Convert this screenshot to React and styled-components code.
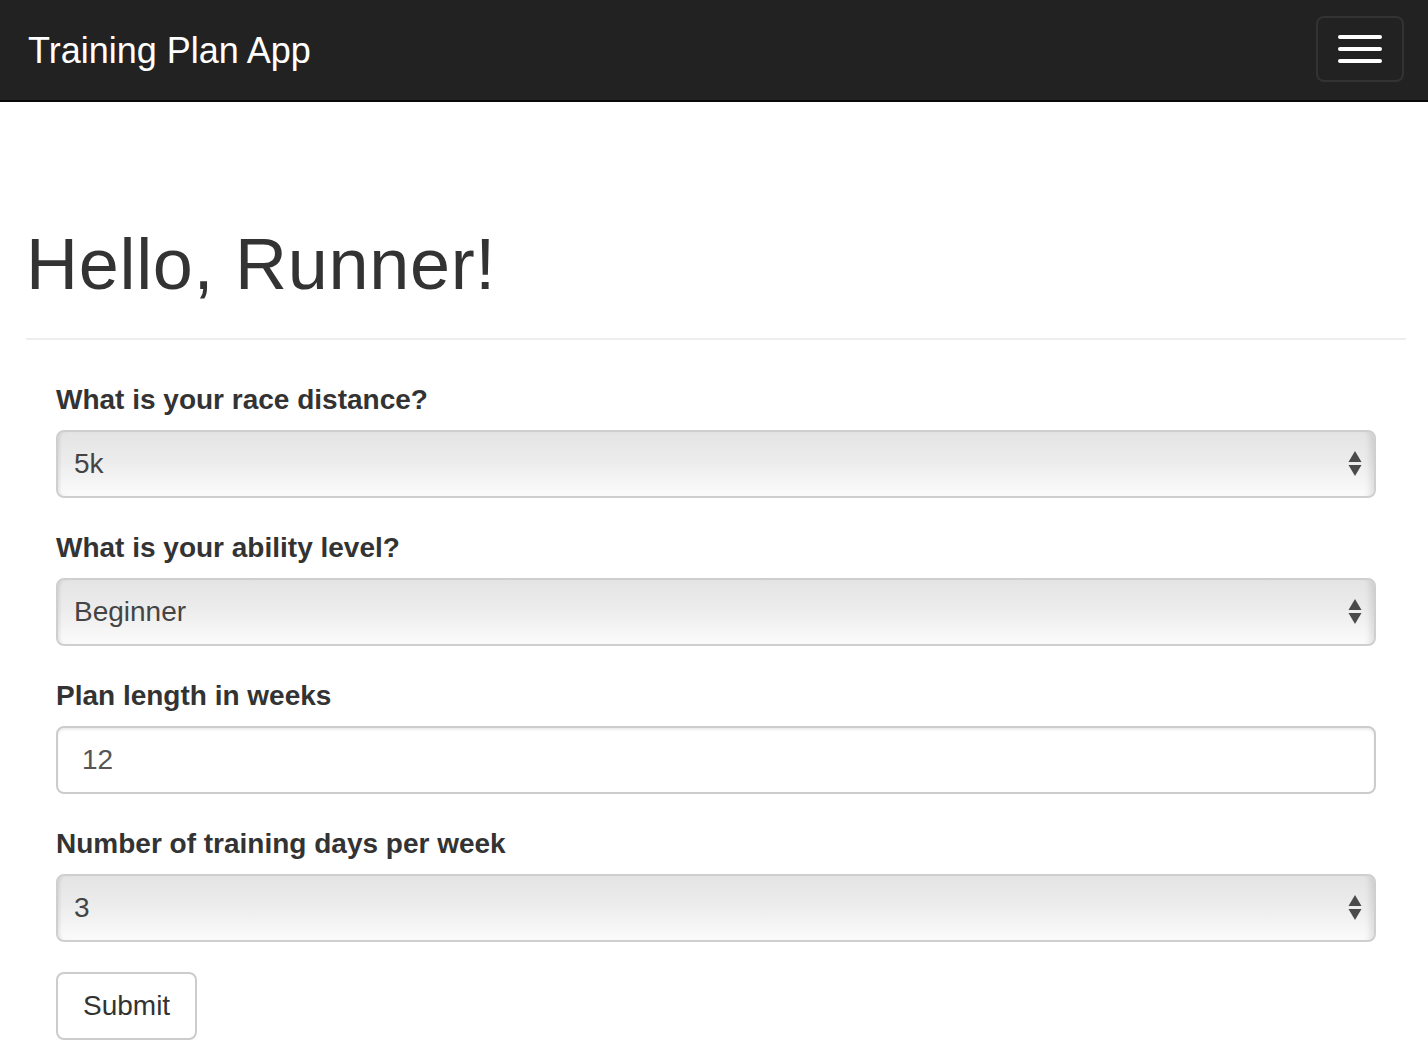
import React from "react";
import styled, { createGlobalStyle } from "styled-components";

const Global = createGlobalStyle`
  * { box-sizing: border-box; }
  html, body { margin: 0; padding: 0; background: #fff; }
  body {
    font-family: "Liberation Sans", Arial, Helvetica, sans-serif;
    font-size: 28px;
    line-height: 1.428;
    color: #333;
  }
`;

const Navbar = styled.nav`
  height: 102px;
  background: #222;
  border-bottom: 2px solid #080808;
  display: flex;
  align-items: center;
  justify-content: space-between;
  padding: 0 24px 0 28px;
`;

const Brand = styled.a`
  color: #fff;
  font-size: 36px;
  line-height: 40px;
  text-decoration: none;
  margin-top: 2px;
`;

const Toggle = styled.button`
  width: 88px;
  height: 66px;
  border: 2px solid #333;
  border-radius: 8px;
  background: transparent;
  display: flex;
  flex-direction: column;
  align-items: center;
  justify-content: center;
  gap: 8px;
  padding: 0;
  margin-top: -2px;
`;

const Bar = styled.span`
  display: block;
  width: 44px;
  height: 4px;
  border-radius: 2px;
  background: #fff;
`;

const Container = styled.main`
  padding: 0 22px 0 26px;
`;

const PageHeader = styled.div`
  margin-top: 122px;
  padding-bottom: 34px;
  border-bottom: 2px solid #eee;
`;

const Title = styled.h1`
  margin: 0;
  font-size: 72px;
  font-weight: 500;
  letter-spacing: 0.7px;
  line-height: 80px;
  color: #333;
`;

const Form = styled.form`
  padding: 40px 30px 0 30px;
`;

const Group = styled.div`
  margin-bottom: 30px;
`;

const Label = styled.label`
  display: block;
  font-weight: bold;
  font-size: 28px;
  line-height: 40px;
  margin-bottom: 10px;
  color: #333;
`;

const SelectWrap = styled.div`
  position: relative;
  height: 68px;
  border: 2px solid #cfcfcf;
  border-radius: 8px;
  background: linear-gradient(#e4e4e4 0%, #ececec 45%, #fbfbfb 100%);
  box-shadow: inset 3px 0 3px -1px rgba(0,0,0,0.08), inset -14px 0 6px -10px rgba(0,0,0,0.1);
  display: flex;
  align-items: center;
  padding-left: 16px;
  color: #444;
  font-size: 28px;
`;

const SelectValue = styled.span`
  line-height: 1;
`;

const Arrows = styled.svg`
  position: absolute;
  right: 12px;
  top: 50%;
  transform: translateY(-50%);
`;

const TextInput = styled.input`
  display: block;
  width: 100%;
  height: 68px;
  border: 2px solid #ccc;
  border-radius: 8px;
  padding: 0 24px;
  font-family: inherit;
  font-size: 28px;
  color: #555;
  background: #fff;
  box-shadow: inset 0 2px 2px rgba(0,0,0,0.075);
  outline: none;
`;

const Button = styled.button`
  height: 68px;
  padding: 0 25px;
  border: 2px solid #ccc;
  border-radius: 8px;
  background: #fff;
  font-family: inherit;
  font-size: 28px;
  color: #333;
`;

const Select = ({ value }) => (
  <SelectWrap>
    <SelectValue>{value}</SelectValue>
    <Arrows width="14" height="28" viewBox="0 0 14 28">
      <path d="M7 1 L13.5 12 L0.5 12 Z" fill="#4a4a4a" />
      <path d="M0.5 15 L13.5 15 L7 26 Z" fill="#4a4a4a" />
    </Arrows>
  </SelectWrap>
);

export default function App() {
  return (
    <>
      <Global />
      <Navbar>
        <Brand href="#">Training Plan App</Brand>
        <Toggle aria-label="menu">
          <Bar />
          <Bar />
          <Bar />
        </Toggle>
      </Navbar>
      <Container>
        <PageHeader>
          <Title>Hello, Runner!</Title>
        </PageHeader>
        <Form onSubmit={(e) => e.preventDefault()}>
          <Group>
            <Label>What is your race distance?</Label>
            <Select value="5k" />
          </Group>
          <Group>
            <Label>What is your ability level?</Label>
            <Select value="Beginner" />
          </Group>
          <Group>
            <Label>Plan length in weeks</Label>
            <TextInput defaultValue="12" />
          </Group>
          <Group>
            <Label>Number of training days per week</Label>
            <Select value="3" />
          </Group>
          <Button type="submit">Submit</Button>
        </Form>
      </Container>
    </>
  );
}
